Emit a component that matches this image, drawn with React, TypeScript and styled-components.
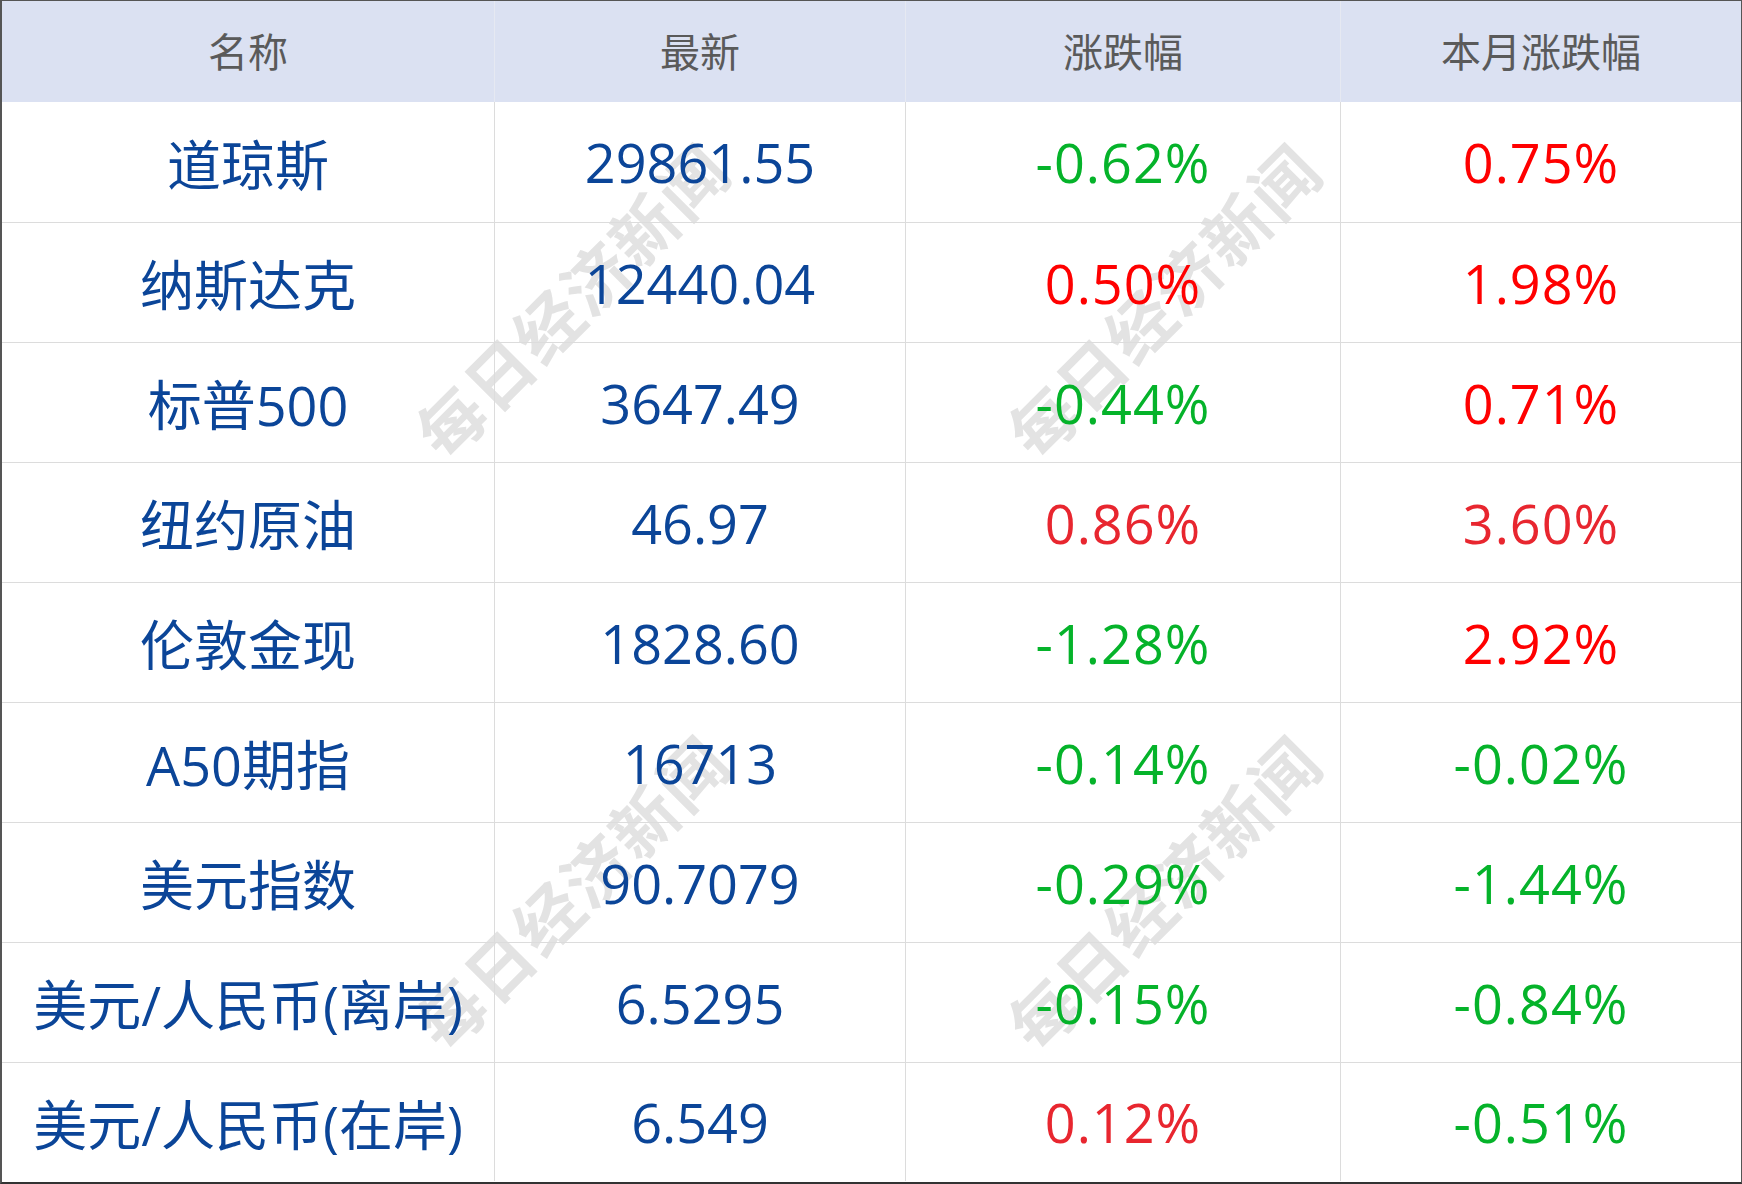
import React from 'react';
import styled, {createGlobalStyle} from "styled-components";

type Tone = 'up' | 'upDeep' | 'down'

type RowType = {
    name: string
    last: string
    change: string
    changeTone: Tone
    month: string
    monthTone: Tone
}

const rows: RowType[] = [
    {name: '道琼斯', last: '29861.55', change: '-0.62%', changeTone: 'down', month: '0.75%', monthTone: 'up'},
    {name: '纳斯达克', last: '12440.04', change: '0.50%', changeTone: 'up', month: '1.98%', monthTone: 'up'},
    {name: '标普500', last: '3647.49', change: '-0.44%', changeTone: 'down', month: '0.71%', monthTone: 'up'},
    {name: '纽约原油', last: '46.97', change: '0.86%', changeTone: 'upDeep', month: '3.60%', monthTone: 'upDeep'},
    {name: '伦敦金现', last: '1828.60', change: '-1.28%', changeTone: 'down', month: '2.92%', monthTone: 'up'},
    {name: 'A50期指', last: '16713', change: '-0.14%', changeTone: 'down', month: '-0.02%', monthTone: 'down'},
    {name: '美元指数', last: '90.7079', change: '-0.29%', changeTone: 'down', month: '-1.44%', monthTone: 'down'},
    {name: '美元/人民币(离岸)', last: '6.5295', change: '-0.15%', changeTone: 'down', month: '-0.84%', monthTone: 'down'},
    {name: '美元/人民币(在岸)', last: '6.549', change: '0.12%', changeTone: 'upDeep', month: '-0.51%', monthTone: 'down'},
]

const marks = [
    {x: 568, y: 298},
    {x: 1160, y: 298},
    {x: 568, y: 890},
    {x: 1160, y: 890},
]

const App = () => {
    return (
        <>
            <GlobalStyle/>
            <Board>
                {marks.map((m, i) => (
                    <Watermark key={i} x={m.x} y={m.y}>每日经济新闻</Watermark>
                ))}
                <Table>
                    <HeadRow>
                        <HeadCell>名称</HeadCell>
                        <HeadCell>最新</HeadCell>
                        <HeadCell>涨跌幅</HeadCell>
                        <HeadCell>本月涨跌幅</HeadCell>
                    </HeadRow>
                    {rows.map((r, i) => (
                        <BodyRow key={r.name} isLast={i === rows.length - 1}>
                            <Cell>{r.name}</Cell>
                            <Cell>{r.last}</Cell>
                            <Cell tone={r.changeTone}>{r.change}</Cell>
                            <Cell tone={r.monthTone}>{r.month}</Cell>
                        </BodyRow>
                    ))}
                </Table>
            </Board>
        </>
    );
};

export default App;

const GlobalStyle = createGlobalStyle`
  html, body {
    margin: 0;
    padding: 0;
    background: #ffffff;
  }
`

const Board = styled.div`
  position: relative;
  width: 1742px;
  height: 1184px;
  box-sizing: border-box;
  border-left: 2px solid #555555;
  border-top: 1px solid #555555;
  border-right: 1px solid #555555;
  border-bottom: 2px solid #333333;
  font-family: "Open Sans", "Noto Sans CJK SC", sans-serif;
  overflow: hidden;
`

const Table = styled.div`
  position: relative;
  z-index: 1;
  display: flex;
  flex-direction: column;
`

const cols = '493px 411px 435px 1fr'

const HeadRow = styled.div`
  display: grid;
  grid-template-columns: ${cols};
  height: 101px;
  background-color: #dbe1f2;
`

const HeadCell = styled.div`
  display: flex;
  align-items: center;
  justify-content: center;
  color: #5a5a5a;
  font-family: "Noto Sans CJK SC", sans-serif;
  font-size: 40px;
  border-right: 1px solid #e6e9f2;
  padding-bottom: 4px;
  box-sizing: border-box;

  &:last-child {
    border-right: none;
  }
`

const BodyRow = styled.div<{ isLast?: boolean }>`
  display: grid;
  grid-template-columns: ${cols};
  height: 120px;
  box-sizing: border-box;
  border-top: 1px solid #dcdcdc;
  ${props => props.isLast && `height: 119px;`}
  &:nth-child(2) {
    border-top: none;
    height: 120px;
  }
`

const toneColor = (tone?: Tone) => {
    if (tone === 'up') return '#ff0000'
    if (tone === 'upDeep') return '#e8262f'
    if (tone === 'down') return '#05b32a'
    return '#0b4598'
}

const Cell = styled.div<{ tone?: Tone }>`
  display: flex;
  align-items: center;
  justify-content: center;
  color: ${props => toneColor(props.tone)};
  font-size: 54px;
  letter-spacing: ${props => props.tone ? '1px' : '0'};
  border-right: 1px solid #dcdcdc;
  white-space: nowrap;

  &:last-child {
    border-right: none;
  }
`

const Watermark = styled.span<{ x: number, y: number }>`
  position: absolute;
  z-index: 0;
  left: ${props => props.x}px;
  top: ${props => props.y}px;
  transform: translate(-50%, -50%) rotate(-45deg);
  font-family: "Noto Sans CJK SC", sans-serif;
  font-weight: 700;
  font-size: 66px;
  letter-spacing: 2px;
  color: #e3e3e3;
  white-space: nowrap;
  pointer-events: none;
`
